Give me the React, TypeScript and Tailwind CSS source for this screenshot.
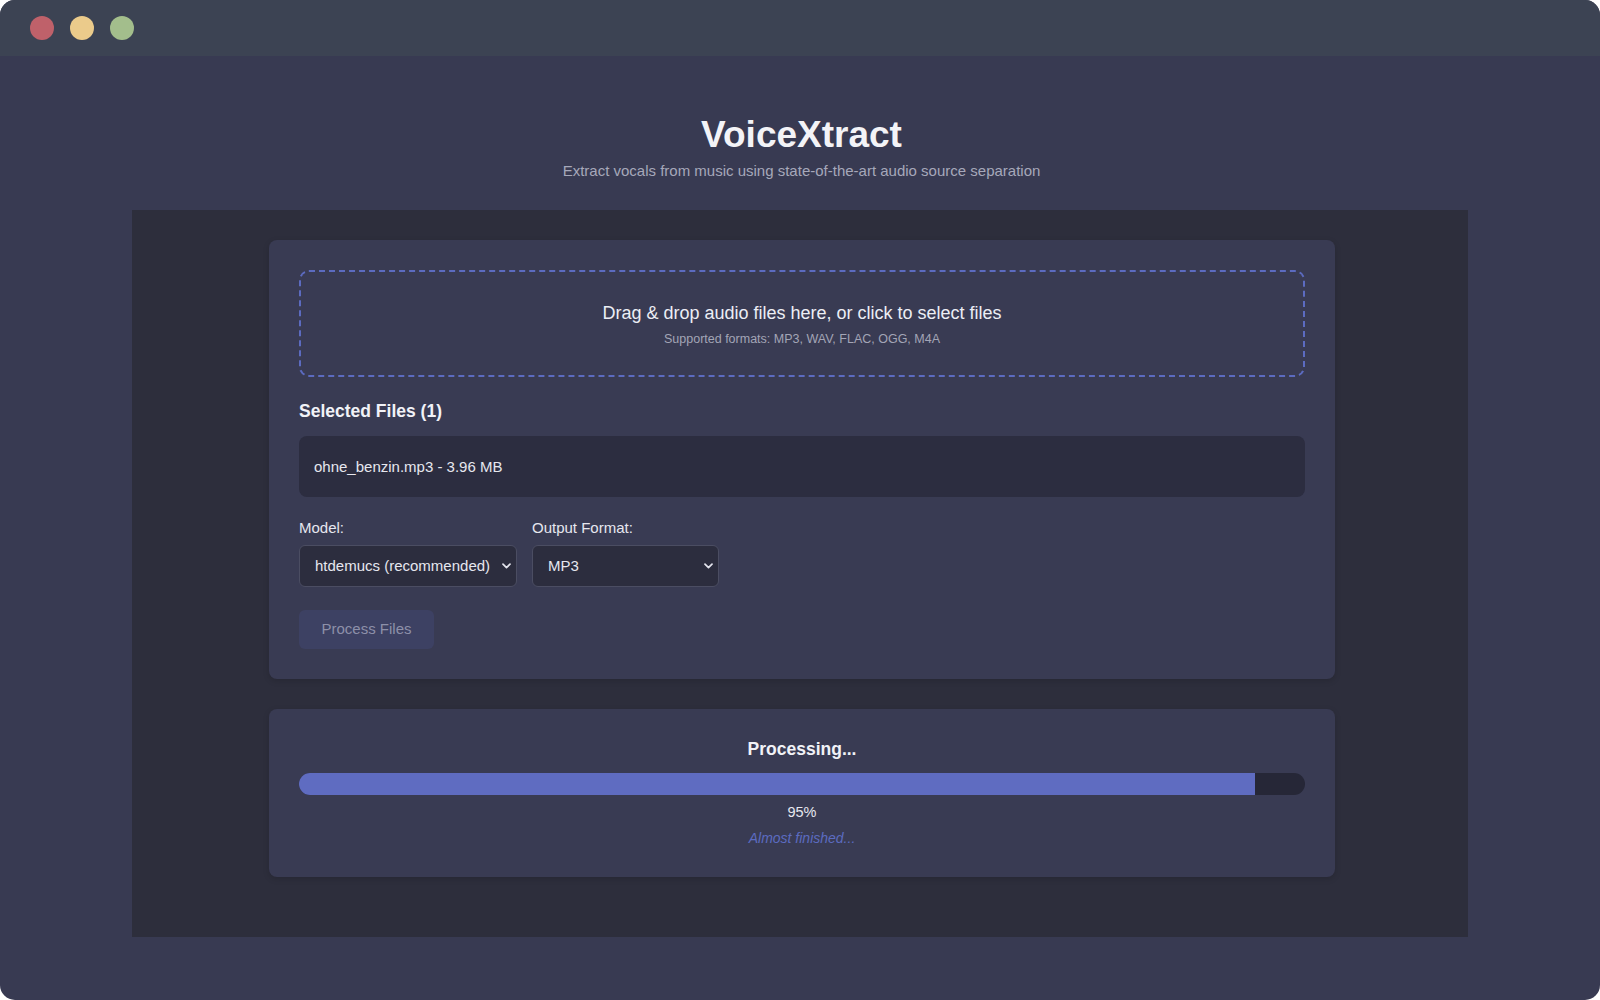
import React from "react";

function Chevron() {
  return (
    <svg width="9" height="6" viewBox="0 0 9 6" className="pointer-events-none absolute right-[5px] top-1/2 -translate-y-1/2">
      <path d="M1 1.2 L4.5 4.6 L8 1.2" fill="none" stroke="#e4e5ee" strokeWidth="1.7" strokeLinecap="round" strokeLinejoin="round" />
    </svg>
  );
}

function Select({ value, width }: { value: string; width: string }) {
  return (
    <div className={`relative ${width} h-[42px] rounded-[6px] border border-[#4b4d62] bg-[#2c2d3e] flex items-center pl-[15px] pr-[24px]`}>
      <span className="text-[15px] leading-[18px] text-[#e6e7ef] whitespace-nowrap">{value}</span>
      <Chevron />
    </div>
  );
}

export default function App() {
  return (
    <div className="w-[1600px] h-[1000px] bg-white" style={{ fontFamily: '"Liberation Sans", Arial, Helvetica, sans-serif' }}>
      <div className="w-full h-full rounded-[15px] overflow-hidden bg-[#383a52] flex flex-col">
        {/* Title bar */}
        <div className="h-[56px] shrink-0 bg-[#3c4353] flex items-center pl-[30px] gap-[16px]">
          <div className="w-[24px] h-[24px] rounded-full bg-[#bf616a]" />
          <div className="w-[24px] h-[24px] rounded-full bg-[#ebcb8b]" />
          <div className="w-[24px] h-[24px] rounded-full bg-[#a3be8c]" />
        </div>

        {/* Header */}
        <div className="flex flex-col items-center pt-[58px] pl-[3px]">
          <h1 className="text-[37px] leading-[42px] font-bold text-[#f3f3f7]">VoiceXtract</h1>
          <p className="mt-[6px] text-[15px] leading-[18px] text-[#a6a8ba]">
            Extract vocals from music using state-of-the-art audio source separation
          </p>
        </div>

        {/* Dark panel */}
        <div className="mt-[30px] mx-[132px] h-[727px] bg-[#2d2e3c] pt-[30px] pl-[4px] flex flex-col items-center gap-[30px]">
          {/* Card 1 */}
          <div className="w-[1066px] rounded-[8px] bg-[#393b53] p-[30px] shadow-[0_2px_6px_rgba(0,0,0,0.15)]">
            <div className="rounded-[10px] border-2 border-dashed border-[#5c6bc0] pt-[31px] pb-[29px] flex flex-col items-center">
              <div className="text-[18px] leading-[21px] text-[#eceef5]">
                Drag &amp; drop audio files here, or click to select files
              </div>
              <div className="mt-[8px] text-[12.5px] leading-[14px] text-[#a3a5b6]">
                Supported formats: MP3, WAV, FLAC, OGG, M4A
              </div>
            </div>

            <h3 className="mt-[24px] mb-[14px] text-[17.5px] leading-[21px] font-bold text-[#f1f2f7]">Selected Files (1)</h3>

            <div className="h-[61px] rounded-[8px] bg-[#2c2d40] flex items-center px-[15px]">
              <span className="text-[15px] leading-[18px] text-[#e6e7ef]">ohne_benzin.mp3 - 3.96 MB</span>
            </div>

            <div className="mt-[22px] flex gap-[15px]">
              <div className="flex flex-col">
                <label className="text-[15px] leading-[18px] mb-[8px] text-[#e6e7ef]">Model:</label>
                <Select value="htdemucs (recommended)" width="w-[218px]" />
              </div>
              <div className="flex flex-col">
                <label className="text-[15px] leading-[18px] mb-[8px] text-[#e6e7ef]">Output Format:</label>
                <Select value="MP3" width="w-[187px]" />
              </div>
            </div>

            <button className="mt-[23px] h-[39px] w-[135px] rounded-[6px] bg-[#3d4163] text-[15px] text-[#8d90a9] flex items-center justify-center">
              Process Files
            </button>
          </div>

          {/* Card 2 */}
          <div className="w-[1066px] rounded-[8px] bg-[#393b53] px-[30px] pt-[30px] pb-[30px] flex flex-col items-center shadow-[0_2px_6px_rgba(0,0,0,0.15)]">
            <div className="text-[17.5px] leading-[21px] font-bold text-[#f1f2f7]">Processing...</div>
            <div className="mt-[13px] w-full h-[22px] rounded-full bg-[#262737] overflow-hidden">
              <div className="h-full bg-[#5f6cc1]" style={{ width: "95%" }} />
            </div>
            <div className="mt-[9px] text-[14.5px] leading-[17px] text-[#e6e7ef]">95%</div>
            <div className="mt-[9px] text-[14px] leading-[17px] italic text-[#5c6bc0]">Almost finished...</div>
          </div>
        </div>
      </div>
    </div>
  );
}
